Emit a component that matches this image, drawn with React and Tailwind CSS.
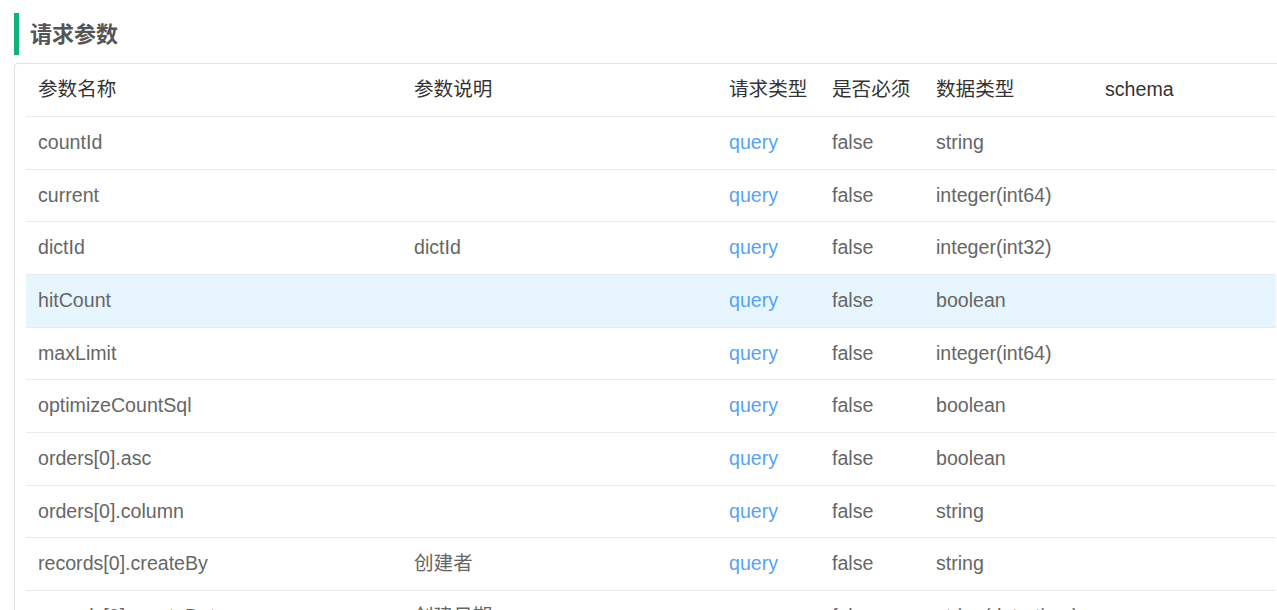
import React from 'react';

const rows = [
  { name: 'countId', desc: '', type: 'string' },
  { name: 'current', desc: '', type: 'integer(int64)' },
  { name: 'dictId', desc: 'dictId', type: 'integer(int32)' },
  { name: 'hitCount', desc: '', type: 'boolean', active: true },
  { name: 'maxLimit', desc: '', type: 'integer(int64)' },
  { name: 'optimizeCountSql', desc: '', type: 'boolean' },
  { name: 'orders[0].asc', desc: '', type: 'boolean' },
  { name: 'orders[0].column', desc: '', type: 'string' },
  { name: 'records[0].createBy', desc: '创建者', type: 'string' },
  { name: 'records[0].createDate', desc: '创建日期', type: 'string(date-time)' },
];

const Row = ({ row }) => (
  <div
    className={`flex h-[52.67px] items-center border-b border-[#e8eaec] text-[19.6px] text-[#666] ${
      row.active ? 'bg-[#e6f5fe]' : ''
    }`}
  >
    <div className="w-[388px] shrink-0 pl-3">{row.name}</div>
    <div className="w-[315px] shrink-0">{row.desc}</div>
    <div className="w-[103px] shrink-0 text-[#57a3f3]">query</div>
    <div className="w-[104px] shrink-0">false</div>
    <div className="w-[169px] shrink-0">{row.type}</div>
    <div className="flex-1"></div>
  </div>
);

export default function App() {
  return (
    <div
      className="h-[610px] w-[1277px] overflow-hidden bg-white"
      style={{ fontFamily: '"Liberation Sans", "Noto Sans CJK SC", sans-serif' }}
    >
      <div className="ml-[14px] mt-[13px] flex h-[42px] items-center border-l-[5px] border-[#0fb37a] pl-[11px]">
        <h2 className="text-[22px] font-bold text-[#555]">请求参数</h2>
      </div>

      <div className="ml-[14px] mt-[8px] rounded-tl border-l border-t border-[#e3e3e3] pl-[11px] pr-px">
        <div className="flex h-[53px] items-center border-b border-[#e8eaec] text-[19.6px] text-[#333]">
          <div className="w-[388px] shrink-0 pl-3">参数名称</div>
          <div className="w-[315px] shrink-0">参数说明</div>
          <div className="w-[103px] shrink-0">请求类型</div>
          <div className="w-[104px] shrink-0">是否必须</div>
          <div className="w-[169px] shrink-0">数据类型</div>
          <div className="flex-1">schema</div>
        </div>
        {rows.map((row) => (
          <Row key={row.name} row={row} />
        ))}
      </div>
    </div>
  );
}
